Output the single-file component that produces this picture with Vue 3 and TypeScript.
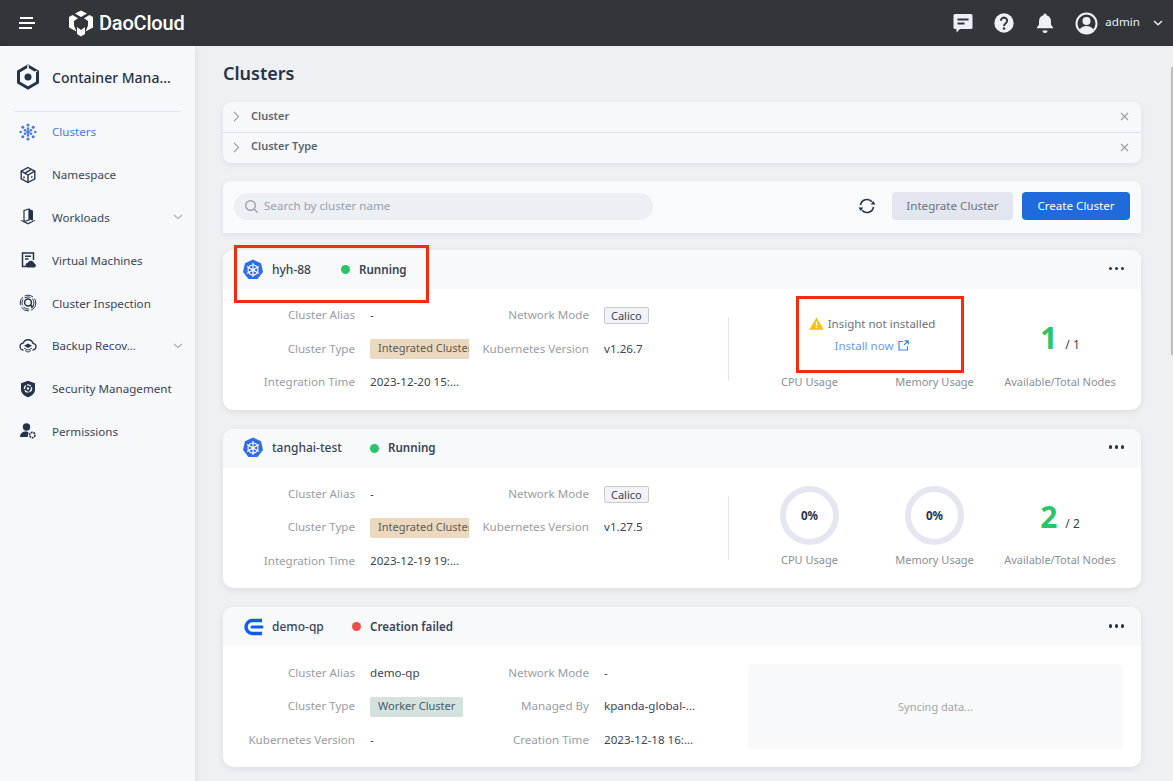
<script setup lang="ts">
interface NavItem {
  label: string
  icon: string
  active?: boolean
  arrow?: boolean
}

interface Field {
  label: string
  value: string
  tag?: 'integrated' | 'worker' | 'plain'
}

interface ClusterRow {
  name: string
  logo: 'k8s' | 'demo'
  status: string
  failed?: boolean
  nameWidth: number
  fields: Field[][]
  mode: 'insight' | 'usage' | 'sync'
  nodes?: number
  total?: number
}

const nav: NavItem[] = [
  { label: 'Clusters', icon: 'clusters', active: true },
  { label: 'Namespace', icon: 'cube' },
  { label: 'Workloads', icon: 'workloads', arrow: true },
  { label: 'Virtual Machines', icon: 'vm' },
  { label: 'Cluster Inspection', icon: 'inspect' },
  { label: 'Backup Recov...', icon: 'backup', arrow: true },
  { label: 'Security Management', icon: 'shield' },
  { label: 'Permissions', icon: 'perm' },
]

const clusters: ClusterRow[] = [
  {
    name: 'hyh-88',
    logo: 'k8s',
    status: 'Running',
    nameWidth: 69,
    mode: 'insight',
    nodes: 1,
    total: 1,
    fields: [
      [
        { label: 'Cluster Alias', value: '-' },
        { label: 'Cluster Type', value: 'Integrated Cluster', tag: 'integrated' },
        { label: 'Integration Time', value: '2023-12-20 15:...' },
      ],
      [
        { label: 'Network Mode', value: 'Calico', tag: 'plain' },
        { label: 'Kubernetes Version', value: 'v1.26.7' },
      ],
    ],
  },
  {
    name: 'tanghai-test',
    logo: 'k8s',
    status: 'Running',
    nameWidth: 98,
    mode: 'usage',
    nodes: 2,
    total: 2,
    fields: [
      [
        { label: 'Cluster Alias', value: '-' },
        { label: 'Cluster Type', value: 'Integrated Cluster', tag: 'integrated' },
        { label: 'Integration Time', value: '2023-12-19 19:...' },
      ],
      [
        { label: 'Network Mode', value: 'Calico', tag: 'plain' },
        { label: 'Kubernetes Version', value: 'v1.27.5' },
      ],
    ],
  },
  {
    name: 'demo-qp',
    logo: 'demo',
    status: 'Creation failed',
    failed: true,
    nameWidth: 80,
    mode: 'sync',
    fields: [
      [
        { label: 'Cluster Alias', value: 'demo-qp' },
        { label: 'Cluster Type', value: 'Worker Cluster', tag: 'worker' },
        { label: 'Kubernetes Version', value: '-' },
      ],
      [
        { label: 'Network Mode', value: '-' },
        { label: 'Managed By', value: 'kpanda-global-...' },
        { label: 'Creation Time', value: '2023-12-18 16:...' },
      ],
    ],
  },
]
</script>

<template>
  <div class="app">
    <header class="topbar">
      <svg class="burger" width="18" height="14" viewBox="0 0 18 14">
        <path d="M2 2h13M1 7h16M1 12h13" stroke="#fff" stroke-width="2" fill="none" />
      </svg>
      <svg class="brand-logo" width="26" height="27" viewBox="0 0 26 27">
        <path d="M13 .5l6 3-6 3.500-6-3.500zM1 7l3.500-2 5.500 3.200-4 2.800v4.500l2.500 6L1 17.500zM25 7l-3.500-2-5.500 3.200 4 2.800v4.500l-2.500 6 7.500-4z" fill="#fff" />
        <path d="M9 17l4 3 4-3v7l-4 2.500L9 24z" fill="#fff" />
      </svg>
      <span class="brand">DaoCloud</span>
      <div class="top-actions">
        <svg width="22" height="22" viewBox="0 0 22 22">
          <path d="M3 2h16a1.500 1.500 0 0 1 1.500 1.500v12a1.500 1.500 0 0 1-1.500 1.500H8l-3.500 3.500V17H3a1.500 1.500 0 0 1-1.500-1.500v-12A1.500 1.500 0 0 1 3 2z" fill="#edf0f6" />
          <path d="M5.500 7.500h11M5.500 11.500h7" stroke="#32353a" stroke-width="2" />
        </svg>
        <svg width="22" height="22" viewBox="0 0 22 22">
          <circle cx="11" cy="11" r="9.700" fill="#edf0f6" />
          <path d="M7.900 8.800a3.100 3.100 0 1 1 5 2.400c-1.200.9-1.900 1.400-1.900 2.800" stroke="#32353a" stroke-width="2" fill="none" />
          <circle cx="11" cy="16.500" r="1.300" fill="#32353a" />
        </svg>
        <svg width="22" height="22" viewBox="0 0 22 22">
          <path d="M11 1.500a1.500 1.500 0 0 1 1.500 1.700c3 .7 4.500 3.200 4.500 6v3.300l2.500 3.700h-17L5 12.500V9.200c0-2.800 1.500-5.300 4.500-6A1.500 1.500 0 0 1 11 1.500z" fill="#edf0f6" />
          <path d="M8.500 18.500h5a2.500 2.500 0 0 1-5 0z" fill="#edf0f6" />
        </svg>
        <div class="user">
          <svg width="23" height="23" viewBox="0 0 23 23">
            <circle cx="11.500" cy="11.500" r="10" fill="none" stroke="#edf0f6" stroke-width="2" />
            <circle cx="11.500" cy="9" r="4" fill="#edf0f6" />
            <path d="M4.500 18c1.500-3 4-4 7-4s5.500 1 7 4c-2 2.300-4.300 3.200-7 3.200s-5-.9-7-3.200z" fill="#edf0f6" />
          </svg>
          <span>admin</span>
          <svg width="10" height="6" viewBox="0 0 10 6">
            <path d="M1 1l4 3.800L9 1" stroke="#edf0f6" stroke-width="1.400" fill="none" />
          </svg>
        </div>
      </div>
    </header>

    <div class="body">
      <aside class="sidebar">
        <div class="product">
          <svg width="24" height="26" viewBox="0 0 24 26">
            <path d="M12 2l9.500 5.500v11L12 24l-9.500-5.500v-11z" fill="none" stroke="#25334a" stroke-width="3" />
            <path d="M12 1v5M21 7l-3 2" stroke="#f7f8fc" stroke-width="1.500" />
            <circle cx="12" cy="13" r="3.500" fill="#25334a" />
          </svg>
          <span>Container Mana...</span>
        </div>
        <nav class="nav">
          <a v-for="item in nav" :key="item.label" class="nav-item" :class="{ active: item.active }">
            <svg class="nav-icon" width="18" height="18" viewBox="0 0 18 18">
              <g v-if="item.icon === 'clusters'" fill="#4a78e0">
                <circle cx="9" cy="9" r="1.900" />
                <circle cx="9" cy="5.600" r="1.300" /><circle cx="9" cy="12.400" r="1.300" />
                <circle cx="6" cy="7.300" r="1.300" /><circle cx="12" cy="7.300" r="1.300" />
                <circle cx="6" cy="10.700" r="1.300" /><circle cx="12" cy="10.700" r="1.300" />
                <circle cx="9" cy="1.900" r="1.500" /><circle cx="9" cy="16.100" r="1.500" />
                <circle cx="3.800" cy="4.200" r="1.500" /><circle cx="14.200" cy="4.200" r="1.500" />
                <circle cx="3.800" cy="13.800" r="1.500" /><circle cx="14.200" cy="13.800" r="1.500" />
                <circle cx="1.700" cy="9" r="1.300" /><circle cx="16.300" cy="9" r="1.300" />
              </g>
              <g v-else-if="item.icon === 'cube'" fill="none" stroke="#25334a" stroke-width="1.400">
                <path d="M9 1.500l6.800 3.700v7.600L9 16.500l-6.800-3.700V5.200z" />
                <path d="M2.200 5.200L9 9l6.800-3.800M9 9v7.500" />
                <path d="M6 7.200l6-3.600M5 10.500v2M12 11h1.500" />
              </g>
              <g v-else-if="item.icon === 'workloads'">
                <path d="M5 2.500l5-1.500v11l-5 1.500z" fill="none" stroke="#25334a" stroke-width="1.200" />
                <path d="M10 1l4 1.500v10l-4-1z" fill="#25334a" />
                <path d="M1.500 12.500L9 16.500l7.500-4-1-.6L9 15 2.500 11.900z" fill="#25334a" />
              </g>
              <g v-else-if="item.icon === 'vm'">
                <path d="M7 15.500H3.500V2h11v7" fill="none" stroke="#25334a" stroke-width="1.500" />
                <path d="M6 5.200h6M6 8h3.500" stroke="#25334a" stroke-width="1.500" />
                <path d="M8 16.500a2.500 2.500 0 0 1 .8-4.800 3.400 3.400 0 0 1 6.400.6 2.200 2.200 0 0 1 .3 4.200z" fill="#25334a" />
              </g>
              <g v-else-if="item.icon === 'inspect'" fill="none" stroke="#25334a">
                <circle cx="9" cy="9" r="7.800" stroke-width="1" stroke-dasharray="9 2" />
                <circle cx="9" cy="9" r="6" stroke-width="1" stroke-dasharray="6 2" />
                <circle cx="9" cy="8.500" r="3.400" stroke-width="1.500" />
                <path d="M11.500 11l2.500 2.500" stroke-width="1.800" />
              </g>
              <g v-else-if="item.icon === 'backup'">
                <path d="M4.500 13A3.500 3.500 0 0 1 1 9.500a3.500 3.500 0 0 1 3.200-3.400 5.200 5.200 0 0 1 9.800.2 3.400 3.400 0 0 1 3 3.300 3.500 3.500 0 0 1-3.500 3.400" fill="none" stroke="#25334a" stroke-width="1.300" />
                <path d="M9 6.500l4 2.300-4 2.300-4-2.300z" fill="#25334a" />
                <path d="M5 11l4 2.200 4-2.200M6 13.500l3 1.700 3-1.700" fill="none" stroke="#25334a" stroke-width=".9" />
              </g>
              <g v-else-if="item.icon === 'shield'">
                <path d="M9 .8l7 2.500v6c0 4-3 6.800-7 8-4-1.200-7-4-7-8v-6z" fill="#25334a" />
                <circle cx="9" cy="8.500" r="3.600" fill="none" stroke="#f7f8fc" stroke-width="1.400" stroke-dasharray="4 1.200" />
                <circle cx="9" cy="8.500" r="1.200" fill="#f7f8fc" />
              </g>
              <g v-else>
                <circle cx="7.500" cy="5" r="3.700" fill="#25334a" />
                <path d="M1 15c0-3.500 2.500-5.500 6-5.500 1 0 1.800.2 2.500.5l-.8 5z" fill="#25334a" />
                <circle cx="13.300" cy="13" r="2.700" fill="none" stroke="#25334a" stroke-width="1.600" stroke-dasharray="2 .7" />
              </g>
            </svg>
            <span class="nav-label">{{ item.label }}</span>
            <svg v-if="item.arrow" class="nav-arrow" width="10" height="6" viewBox="0 0 10 6">
              <path d="M1 1l4 3.600L9 1" stroke="#a3a9b5" stroke-width="1.100" fill="none" />
            </svg>
          </a>
        </nav>
      </aside>

      <main class="main">
        <h1>Clusters</h1>

        <section class="filters">
          <div v-for="f in ['Cluster', 'Cluster Type']" :key="f" class="filter-row">
            <svg width="7" height="11" viewBox="0 0 7 11">
              <path d="M1 1l4.600 4.500L1 10" stroke="#9aa0ac" stroke-width="1.100" fill="none" />
            </svg>
            <span>{{ f }}</span>
            <svg class="filter-x" width="9" height="9" viewBox="0 0 9 9">
              <path d="M1 1l7 7M8 1L1 8" stroke="#9aa0ac" stroke-width="1.200" />
            </svg>
          </div>
        </section>

        <section class="toolbar">
          <div class="search">
            <svg width="15" height="15" viewBox="0 0 15 15">
              <circle cx="6.500" cy="6.500" r="4.800" fill="none" stroke="#9aa0ac" stroke-width="1.400" />
              <path d="M10 10l3.500 3.500" stroke="#9aa0ac" stroke-width="1.400" />
            </svg>
            <span>Search by cluster name</span>
          </div>
          <svg class="refresh" width="18" height="18" viewBox="0 0 18 18">
            <path d="M2.500 8A6.600 6.600 0 0 1 14 4.800M15.500 10A6.600 6.600 0 0 1 4 13.200" fill="none" stroke="#25334a" stroke-width="1.600" />
            <path d="M12.800 7.500h4.700l-2.300-3.500zM5.200 10.500H.5l2.300 3.500z" fill="#25334a" />
          </svg>
          <button class="btn btn-grey">Integrate Cluster</button>
          <button class="btn btn-blue">Create Cluster</button>
        </section>

        <article v-for="c in clusters" :key="c.name" class="card">
          <div class="card-head">
            <svg v-if="c.logo === 'k8s'" class="logo" width="22" height="22" viewBox="0 0 22 22">
              <path d="M11 .5l8 3.800 2 8.700-5.500 7h-9L1 13l2-8.700z" fill="#326ce5" />
              <g fill="none" stroke="#fff" stroke-width="1.100">
                <circle cx="11" cy="11" r="5" />
                <path d="M11 4v14M5 7.500l12 7M17 7.500l-12 7" />
              </g>
              <circle cx="11" cy="11" r="1.500" fill="#fff" />
            </svg>
            <svg v-else class="logo" width="22" height="22" viewBox="0 0 22 22">
              <path d="M20 4.500h-9.500a6.500 6.500 0 0 0 0 13H20" fill="none" stroke="#0f5cf5" stroke-width="3.400" />
              <path d="M10 11h10" stroke="#0f5cf5" stroke-width="3" stroke-linecap="round" />
            </svg>
            <span class="name" :style="{ width: c.nameWidth + 'px' }">{{ c.name }}</span>
            <i class="dot" :class="{ red: c.failed }"></i>
            <span class="status">{{ c.status }}</span>
            <span class="more"><i></i><i></i><i></i></span>
          </div>
          <div class="card-body">
            <div v-for="(col, i) in c.fields" :key="i" class="col" :class="'col' + i">
              <div v-for="f in col" :key="f.label" class="field">
                <span class="label">{{ f.label }}</span>
                <span class="value">
                  <span v-if="f.tag" class="tag" :class="f.tag">{{ f.value }}</span>
                  <template v-else>{{ f.value }}</template>
                </span>
              </div>
            </div>

            <div v-if="c.mode === 'sync'" class="sync">Syncing data...</div>
            <div v-else class="stats">
              <div class="divider"></div>
              <div class="usage-pair">
                <div v-if="c.mode === 'insight'" class="insight">
                  <div class="warn">
                    <svg width="15" height="13" viewBox="0 0 15 13">
                      <path d="M7.500 .5L14.800 12.800H.2z" fill="#fac00e" />
                      <path d="M7.500 4.500v4.200M7.500 9.800v1.300" stroke="#fff" stroke-width="1.300" />
                    </svg>
                    Insight not installed
                  </div>
                  <a class="install">
                    Install now
                    <svg width="11" height="11" viewBox="0 0 11 11">
                      <path d="M5 1.500H1v8.500h8.500V6M6 5L10 1M6.500 .8h3.800v3.800" fill="none" stroke="#3a8ae6" stroke-width="1.200" />
                    </svg>
                  </a>
                </div>
                <template v-else>
                  <div class="ring">0%</div>
                  <div class="ring">0%</div>
                </template>
                <span class="stat-label">CPU Usage</span>
                <span class="stat-label">Memory Usage</span>
              </div>
              <div class="nodes">
                <div class="count"><b>{{ c.nodes }}</b><span>/ {{ c.total }}</span></div>
                <span class="stat-label">Available/Total Nodes</span>
              </div>
            </div>
          </div>
          <template v-if="c.name === 'hyh-88'">
            <div class="mark mark-head"></div>
            <div class="mark mark-insight"></div>
          </template>
        </article>
      </main>
      <div class="scroll-thumb"></div>
    </div>
  </div>
</template>

<style>
html, body { margin: 0; height: 100%; overflow: hidden; }
</style>

<style scoped>
.app {
  width: 1173px;
  height: 781px;
  overflow: hidden;
  display: flex;
  flex-direction: column;
  font-family: "Noto Sans", "Open Sans", sans-serif;
  font-size: 11.6px;
  color: #25334a;
  background: #eff0f4;
}

.topbar {
  height: 46px;
  flex: none;
  display: flex;
  align-items: center;
  background: #32353a;
  color: #fff;
}
.burger { margin-left: 18px; }
.brand-logo { margin-left: 32px; }
.brand {
  margin-left: 5px;
  font-family: Roboto, sans-serif;
  font-size: 20px;
  font-weight: 500;
  letter-spacing: -.2px;
}
.top-actions {
  margin-left: auto;
  display: flex;
  align-items: center;
  gap: 19px;
  padding-right: 10px;
}
.user {
  display: flex;
  align-items: center;
  gap: 7px;
  color: #edf0f6;
}
.user span { margin-top: -3px; }
.user svg:last-child { margin-left: 6px; }

.body { flex: 1; display: flex; min-height: 0; position: relative; }

.sidebar {
  width: 195px;
  flex: none;
  background: #f7f8fc;
  box-shadow: 2px 0 6px rgba(40, 50, 70, .08);
  padding: 0 14px;
  box-sizing: border-box;
}
.product {
  height: 66px;
  display: flex;
  align-items: center;
  gap: 12px;
  padding-left: 2px;
  padding-bottom: 3px;
  box-sizing: border-box;
  border-bottom: 1px solid #e3e6ec;
  font-size: 14px;
  font-weight: 500;
}
.nav { display: flex; flex-direction: column; margin-top: -1px; }
.nav-item {
  height: 42.8px;
  padding-bottom: 1px;
  box-sizing: border-box;
  display: flex;
  align-items: center;
  gap: 15px;
  padding-left: 6px;
  color: #3a4557;
}
.nav-item.active { color: #4a78e0; }
.nav-icon { flex: none; margin-left: -1px; }
.nav-arrow { margin-left: auto; margin-right: -2px; }

.main {
  flex: 1;
  padding: 0 32px 0 28px;
  min-width: 0;
}
h1 {
  margin: 0;
  height: 56px;
  padding-bottom: 2px;
  box-sizing: border-box;
  display: flex;
  align-items: center;
  font-size: 18px;
  font-weight: 600;
  color: #25334a;
}

.filters {
  border-radius: 8px;
  background: #f7f8fb;
  box-shadow: 0 2px 6px rgba(40, 50, 70, .08);
}
.filter-row {
  height: 30px;
  display: flex;
  align-items: center;
  padding: 0 12px 0 10px;
  font-size: 11px;
  font-weight: 600;
  color: #5d6470;
}
.filter-row + .filter-row { border-top: 1px solid #d9dde8; }
.filter-row span { margin: -3px 0 0 11px; }
.filter-row + .filter-row span { margin-top: -5px; }
.filter-row svg { margin-top: -1px; }
.filter-x { margin-left: auto; }

.toolbar {
  margin-top: 18px;
  height: 52px;
  box-sizing: border-box;
  padding: 0 11px 2px;
  display: flex;
  align-items: center;
  border-radius: 8px 8px 0 0;
  background: #f9fafc;
  box-shadow: 0 2px 6px rgba(40, 50, 70, .08);
}
.search {
  width: 419px;
  height: 27px;
  box-sizing: border-box;
  display: flex;
  align-items: center;
  gap: 5px;
  padding-left: 10px;
  border-radius: 14px;
  background: #eceff4;
  color: #9aa0ac;
}
.search span { margin-top: -1px; }
.refresh { margin-left: auto; margin-right: 16px; }
.btn {
  height: 28px;
  border: 0;
  border-radius: 4px;
  font: inherit;
  padding: 0 0 2px;
}
.btn-grey { width: 121px; background: #e3e6ee; color: #6b7280; }
.btn-blue { width: 108px; margin-left: 9px; background: #1f6bdb; color: #fff; }

.card {
  position: relative;
  margin-top: 17px;
  height: 159.7px;
  border-radius: 10px;
  background: #fff;
  box-shadow: 0 2px 6px rgba(40, 50, 70, .1);
  display: flex;
  flex-direction: column;
}
.card + .card { margin-top: 19px; }
.card-head {
  height: 39px;
  flex: none;
  display: flex;
  align-items: center;
  padding: 0 17px 0 19px;
  border-radius: 10px 10px 0 0;
  background: #f8f9fb;
}
.logo { flex: none; }
.name { margin: -1px 0 0 8px; font-size: 12px; font-weight: 500; color: #3a4557; }
.dot {
  width: 9px;
  height: 9px;
  border-radius: 50%;
  background: #2cc46a;
}
.dot.red { background: #ee4d4d; }
.status { margin: -1px 0 0 9px; font-weight: 600; color: #3a4557; }
.more { margin: -2px 0 0 auto; display: flex; gap: 2.5px; }
.more i { width: 3.5px; height: 3.5px; border-radius: 50%; background: #25334a; }

.card-body { flex: 1; display: flex; }
.col { padding-top: 10px; display: flex; flex-direction: column; }
.col0 { width: 246px; }
.col1 { width: 259px; }
.field { height: 33.5px; box-sizing: border-box; padding-bottom: 2px; display: flex; align-items: center; }
.label {
  flex: none;
  color: #989da6;
  text-align: right;
}
.col0 .label { width: 132px; }
.col1 .label { width: 120px; }
.value {
  margin-left: 15px;
  width: 99px;
  overflow: hidden;
  white-space: nowrap;
  color: #3a4557;
}
.tag {
  display: inline-block;
  box-sizing: border-box;
  height: 20px;
  line-height: 18px;
  margin-top: 2px;
  padding: 0 8px;
  border-radius: 2px;
  font-size: 11px;
}
.tag.integrated { background: #ebd9bf; color: #5d5a52; }
.tag.worker { background: #d3e1df; color: #4a5a66; }
.tag.plain {
  height: 17px;
  line-height: 15px;
  padding: 0 6px;
  border: 1px solid #c6cad3;
  background: #f1f3f7;
  color: #3a4557;
}

.stats {
  flex: 1;
  display: flex;
  align-items: stretch;
}
.divider {
  flex: none;
  width: 1px;
  height: 64px;
  margin-top: 28px;
  background: #e3e5ea;
}
.usage-pair {
  display: grid;
  grid-template-columns: 125px 125px;
  grid-template-rows: 1fr auto;
  justify-items: center;
  align-items: center;
  margin-left: 18px;
}
.ring {
  width: 47px;
  height: 47px;
  align-self: start;
  margin-top: 18px;
  border: 6px solid #e4e7ef;
  border-radius: 50%;
  display: flex;
  align-items: center;
  justify-content: center;
  font-weight: 700;
  color: #25334a;
}
.stat-label {
  color: #8a8f99;
  font-size: 11px;
  white-space: nowrap;
  padding-bottom: 21px;
}
.insight {
  grid-column: 1 / span 2;
  text-align: center;
  padding-top: 6px;
}
.warn { display: flex; align-items: center; gap: 4px; color: #6b7280; font-size: 11.5px; }
.install {
  display: inline-flex;
  align-items: center;
  gap: 5px;
  margin-top: 7px;
  color: #6a9bec;
  font-size: 11.5px;
}
.nodes {
  width: 126px;
  display: flex;
  flex-direction: column;
  align-items: center;
  justify-content: space-between;
}
.count {
  margin-top: 34px;
  display: flex;
  align-items: baseline;
  gap: 8px;
  color: #3a4557;
  font-size: 12px;
}
.count b { font-size: 30px; font-weight: 700; color: #2cc46a; line-height: 1; }

.sync {
  flex: none;
  width: 375px;
  height: 85px;
  margin: 18px 0 0 20px;
  display: flex;
  align-items: center;
  justify-content: center;
  border-radius: 4px;
  background: #f8f9fb;
  color: #a0a5ae;
  font-size: 11px;
}

.mark {
  position: absolute;
  border: 3px solid #f32c0c;
  box-sizing: border-box;
  pointer-events: none;
}
.mark-head { left: 11px; top: -5px; width: 195px; height: 58px; }
.mark-insight { left: 573px; top: 46px; width: 168px; height: 77px; }

.scroll-thumb {
  position: absolute;
  right: 0;
  top: 21px;
  width: 2px;
  height: 288px;
  background: #bdbdbd;
}
</style>
